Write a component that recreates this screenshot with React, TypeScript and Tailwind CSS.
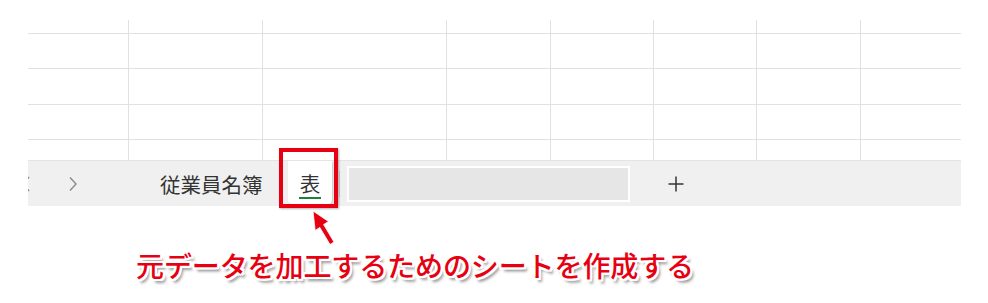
const colWidths = [101, 134, 184, 104, 103, 103, 104, 100];
const rowHeights = [14, 35, 36, 35, 20];

function GridRows() {
  return (
    <div className="w-[933px]">
      {rowHeights.map((h, r) => (
        <div
          key={r}
          className={
            r < rowHeights.length - 1
              ? "grid grid-cols-[101px_134px_184px_104px_103px_103px_104px_100px] border-b border-[#e1e1e1]"
              : "grid grid-cols-[101px_134px_184px_104px_103px_103px_104px_100px]"
          }
          style={{ height: h }}
        >
          {colWidths.map((_, c) => (
            <div
              key={c}
              className={c < colWidths.length - 1 ? "border-r border-[#e1e1e1]" : ""}
            />
          ))}
        </div>
      ))}
    </div>
  );
}

function SheetBar() {
  return (
    <div className="w-[933px] h-[46px] bg-[#f0f0f0] border-t border-[#e4e4e4] flex items-center overflow-hidden">
      {/* clipped "previous" chevron */}
      <svg className="ml-[-7px] shrink-0" width="10" height="16" viewBox="0 0 10 16">
        <path d="M8 1 L2 8 L8 15" fill="none" stroke="#8a8a8a" strokeWidth="1.4" />
      </svg>
      <svg className="ml-[37px] shrink-0" width="10" height="16" viewBox="0 0 10 16">
        <path d="M2 1.5 L8 8 L2 14.5" fill="none" stroke="#8a8a8a" strokeWidth="1.4" />
      </svg>
      <div className="ml-[82px] w-[110px] shrink-0 text-[20.5px] leading-[24px] text-[#333] font-['Noto_Sans_CJK_JP',sans-serif]">
        従業員名簿
      </div>
      <div className="ml-[18px] self-start w-[44px] h-[43px] bg-white rounded-b-[4px] shadow-[1px_1px_2px_rgba(0,0,0,0.18)] flex flex-col items-center pt-[10px] shrink-0">
        <span className="text-[20.5px] leading-[24px] text-[#333] font-['Noto_Sans_CJK_JP',sans-serif]">
          表
        </span>
        <span className="mt-[2px] w-[22px] h-[2px] bg-[#1e7e3e]" />
      </div>
      <div className="ml-[7px] w-px h-[26px] bg-[#cfcfcf] shrink-0" />
      <div className="ml-[7px] w-[283px] h-[36px] bg-[#e6e6e6] border-2 border-white shrink-0" />
      <svg className="ml-[38px] shrink-0" width="16" height="16" viewBox="0 0 16 16">
        <path d="M8 0.5 V15.5 M0.5 8 H15.5" fill="none" stroke="#333" strokeWidth="1.5" />
      </svg>
    </div>
  );
}

export default function App() {
  return (
    <div className="relative w-[988px] h-[303px] bg-white overflow-hidden">
      <div className="pt-[20px] pl-[28px]">
        <GridRows />
        <SheetBar />
      </div>

      <div className="mt-[41px] pl-[136px] text-[28px] leading-[36px] font-medium tracking-[-0.1px] text-[#e60012] font-['Noto_Sans_CJK_JP',sans-serif] [text-shadow:-2px_-2px_0_#fff,2px_-2px_0_#fff,-2px_2px_0_#fff,2px_2px_0_#fff,0_2px_0_#fff,2px_0_0_#fff,-2px_0_0_#fff,0_-2px_0_#fff,3px_4px_3px_rgba(0,0,0,0.45)]">
        元データを加工するためのシートを作成する
      </div>

      {/* highlight box around the sheet tab */}
      <div className="absolute left-[279px] top-[148px] w-[59px] h-[60px] border-4 border-[#e60012] shadow-[1px_1px_2px_rgba(0,0,0,0.3)]" />

      {/* arrow pointing at the tab */}
      <svg
        className="absolute left-[300px] top-[205px]"
        width="40"
        height="45"
        viewBox="0 0 40 45"
      >
        <polygon
          points="13,6 28.5,16.5 23.6,19.6 34,37 30,39.5 19.8,22.4 15.2,25.5"
          fill="#e60012"
          stroke="#fff"
          strokeWidth="0.8"
          strokeLinejoin="round"
        />
      </svg>
    </div>
  );
}
